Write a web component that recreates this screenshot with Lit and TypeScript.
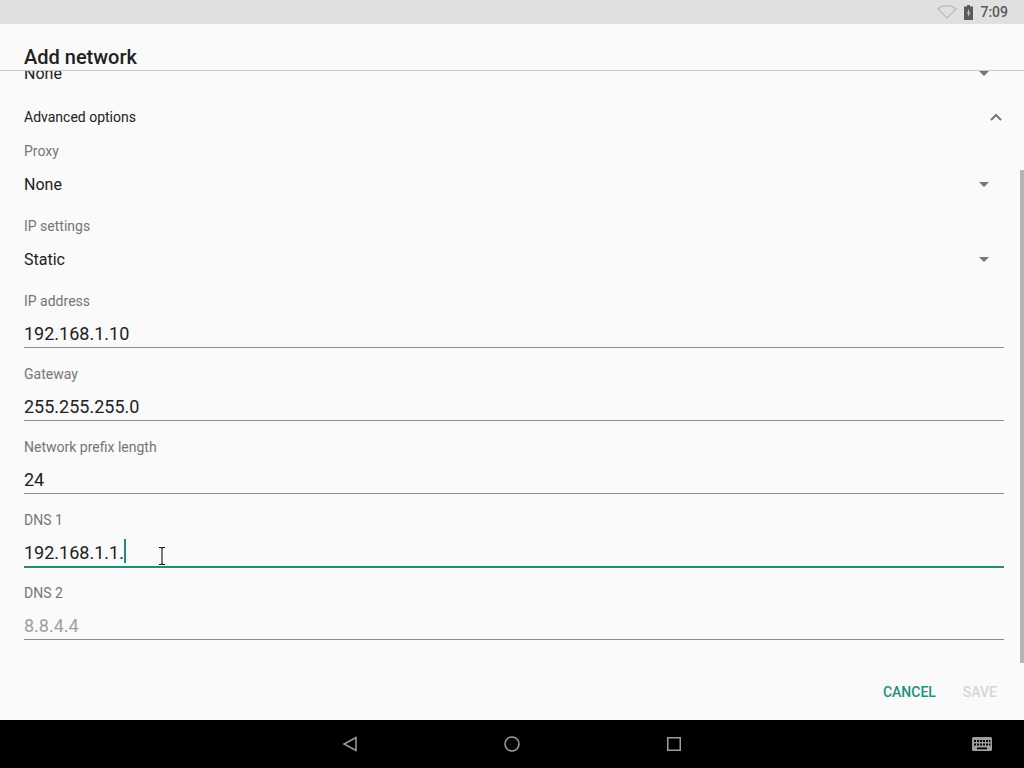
import { LitElement, html, css, svg } from "lit";
import { customElement } from "lit/decorators.js";

const caret = svg`<svg class="caret" width="10" height="5" viewBox="0 0 10 5"><path d="M0 0h10L5 5z" fill="#757575"/></svg>`;

@customElement("app-root")
export class AppRoot extends LitElement {
  static styles = css`
    :host { display: flex; flex-direction: column; width: 1024px; height: 768px; overflow: hidden; position: relative; background: #fafafa; font-family: Roboto, "Liberation Sans", sans-serif; color: #212121; }
    .status { height: 24px; flex: none; background: #e0e0e0; display: flex; align-items: center; justify-content: flex-end; padding-right: 16px; gap: 7px; color: #5a5a5a; font-size: 14px; font-weight: 500; }
    .dialog { flex: 1; min-height: 0; display: flex; flex-direction: column; }
    .title { flex: none; height: 47px; box-sizing: border-box; padding: 21px 24px 0; font-size: 20px; line-height: 24px; font-weight: 500; border-bottom: 1px solid #c9c9c9; }
    .scroll { flex: 1; min-height: 0; overflow: hidden; padding: 0 20px 0 24px; }
    .inner { margin-top: -14px; }
    .spin { height: 32px; display: flex; align-items: center; justify-content: space-between; font-size: 16px; padding-right: 15px; }
    .adv { height: 32px; margin: 12px 0 7px; display: flex; align-items: center; justify-content: space-between; font-size: 14px; padding-right: 2px; }
    .label { font-size: 14px; line-height: 20px; height: 20px; color: #757575; }
    .group { height: 75px; box-sizing: border-box; padding-top: 1px; }
    .group .spin { margin-top: 7px; }
    .field { height: 73px; box-sizing: border-box; padding-top: 1px; }
    .val { height: 31px; margin-top: 6px; padding-top: 4px; box-sizing: border-box; font-size: 18px; line-height: 26px; border-bottom: 1px solid #8a8a8a; display: flex; }
    .val.hint { color: #9e9e9e; }
    .val.focus { border-bottom: 2px solid #26897c; height: 32px; position: relative; }
    .cursor { width: 2px; height: 24px; background: #26897c; margin-top: -1px; }
    .ibeam { position: absolute; left: 133.500px; top: 11px; }
    .actions { flex: none; height: 56px; display: flex; justify-content: flex-end; align-items: center; gap: 28px; padding-right: 27px; font-size: 14px; font-weight: 500; }
    .cancel { color: #1f8f7f; margin-right: -1px; }
    .save { color: #d6d6d6; }
    .thumb { position: absolute; right: 0; top: 170px; width: 4px; height: 493px; background: #b4b4b4; }
    .nav { flex: none; height: 48px; background: #000; position: relative; display: flex; align-items: center; justify-content: center; gap: 146px; }
    .kbd { position: absolute; right: 32px; top: 17px; }
  `;

  field(label: string, value: string) {
    return html`<div class="field"><div class="label">${label}</div><div class="val">${value}</div></div>`;
  }

  render() {
    return html`
      <div class="status">
        <svg width="20" height="14" viewBox="0 0 20 14"><path d="M1 3.800C6-.4 14-.4 19 3.800L10 13.200z" fill="none" stroke="#bdbdbd" stroke-width="1.300"/></svg>
        <svg width="9" height="15" viewBox="0 0 9 15"><path d="M3 0h3v1.500h3V15H0V1.500h3z" fill="#5a5a5a"/><path d="M5.200 3.500 3 8.500h1.500l-.7 3.800L6.200 7.500H4.700z" fill="#e0e0e0"/></svg>
        <span>7:09</span>
      </div>
      <div class="dialog">
        <div class="title">Add network</div>
        <div class="scroll"><div class="inner">
          <div class="spin"><span>None</span>${caret}</div>
          <div class="adv"><span>Advanced options</span>
            <svg width="12" height="8" viewBox="0 0 12 8"><path d="M1 7l5-5 5 5" fill="none" stroke="#757575" stroke-width="2"/></svg>
          </div>
          <div class="group"><div class="label">Proxy</div><div class="spin"><span>None</span>${caret}</div></div>
          <div class="group"><div class="label">IP settings</div><div class="spin"><span>Static</span>${caret}</div></div>
          ${this.field("IP address", "192.168.1.10")}
          ${this.field("Gateway", "255.255.255.0")}
          ${this.field("Network prefix length", "24")}
          <div class="field"><div class="label">DNS 1</div>
            <div class="val focus">192.168.1.1.<span class="cursor"></span>
              <svg class="ibeam" width="8" height="18" viewBox="0 0 8 18"><path d="M1 .5h2.200L4 1.500l.8-1H7M4 1.500v15M1 17.500h2.200l.8-1 .8 1H7" fill="none" stroke="#111" stroke-width="1.100"/></svg>
            </div>
          </div>
          <div class="field"><div class="label">DNS 2</div><div class="val hint">8.8.4.4</div></div>
        </div></div>
        <div class="actions"><span class="cancel">CANCEL</span><span class="save">SAVE</span></div>
      </div>
      <div class="thumb"></div>
      <div class="nav">
        <svg width="16" height="16" viewBox="0 0 16 16"><path d="M14 1.500v13L2 8z" fill="none" stroke="#9e9e9e" stroke-width="1.500"/></svg>
        <svg width="16" height="16" viewBox="0 0 16 16"><circle cx="8" cy="8" r="7" fill="none" stroke="#9e9e9e" stroke-width="1.500"/></svg>
        <svg width="16" height="16" viewBox="0 0 16 16"><rect x="1.750" y="1.750" width="12.500" height="12.500" fill="none" stroke="#9e9e9e" stroke-width="1.500"/></svg>
        <svg class="kbd" width="20" height="14" viewBox="0 0 20 14"><rect width="20" height="14" rx="1.500" fill="#9e9e9e"/><path d="M2 3h2v2H2zM5 3h2v2H5zM8 3h2v2H8zM11 3h2v2h-2zM14 3h2v2h-2zM17 3h1.500v2H17zM2 6.500h2v2H2zM5 6.500h2v2H5zM8 6.500h2v2H8zM11 6.500h2v2h-2zM14 6.500h2v2h-2zM17 6.500h1.500v2H17zM5 10.500h10v1.800H5z" fill="#000"/></svg>
      </div>
    `;
  }
}
